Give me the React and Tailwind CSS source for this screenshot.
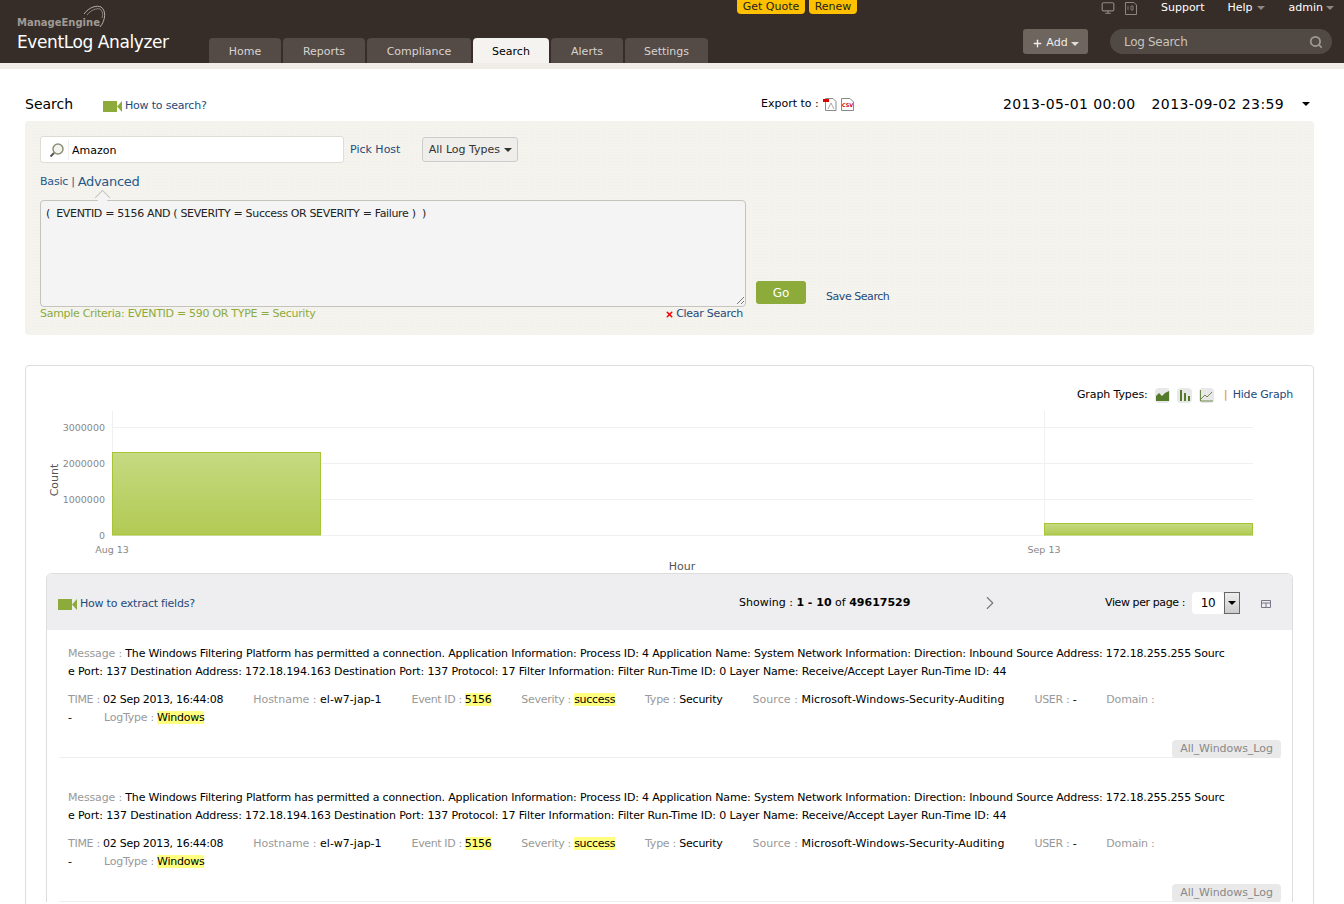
import React from 'react';
import { Monitor, Search, Plus, ChevronRight, X } from 'lucide-react';

const tabs = [
  { name: 'Home', width: 'w-[72px]' },
  { name: 'Reports', width: 'w-[82px]' },
  { name: 'Compliance', width: 'w-[104px]' },
  { name: 'Search', width: 'w-[76px]', active: true },
  { name: 'Alerts', width: 'w-[72px]' },
  { name: 'Settings', width: 'w-[83px]' },
];

const lineOne = 'The Windows Filtering Platform has permitted a connection. Application Information: Process ID: 4 Application Name: System Network Information: Direction: Inbound Source Address: 172.18.255.255 Sourc';
const lineTwo = 'e Port: 137 Destination Address: 172.18.194.163 Destination Port: 137 Protocol: 17 Filter Information: Filter Run-Time ID: 0 Layer Name: Receive/Accept Layer Run-Time ID: 44';

function Caret({ className }) {
  return <span className={`inline-block w-0 h-0 border-x-[4px] border-x-transparent border-t-[4px] ${className}`}></span>;
}

function VideoIcon() {
  return (
    <svg width="19" height="11" viewBox="0 0 19 11" className="shrink-0">
      <rect x="0" y="0" width="14" height="11" fill="#8cab3b" />
      <path d="M14 5.5 L19 0 V11 Z" fill="#8cab3b" />
    </svg>
  );
}

function Field({ label, value, mark, className }) {
  return (
    <span className={`whitespace-nowrap ${className || ''}`}>
      <span className="text-[#999]">{label} : </span>
      {value && <span className={mark ? 'bg-[#ffff80] text-black' : 'text-black'}>{value}</span>}
    </span>
  );
}

function LogRow() {
  return (
    <div className="mb-[16px] ml-3 mr-[11px] h-[128px] border-b border-[#eee] pl-[9px] pt-[15px] text-[11px] leading-[18px]">
      <div className="whitespace-nowrap tracking-[-0.165px] text-black">
        <span className="text-[#999]">Message : </span>{lineOne}
      </div>
      <div className="whitespace-nowrap tracking-[-0.13px] text-black">{lineTwo}</div>
      <div className="mt-[10px] flex gap-[30px]">
        <Field label="TIME" value="02 Sep 2013, 16:44:08" className="tracking-[-0.29px]" />
        <Field label="Hostname" value="el-w7-jap-1" />
        <Field label="Event ID" value="5156" mark className="tracking-[-0.38px]" />
        <Field label="Severity" value="success" mark className="tracking-[-0.3px]" />
        <Field label="Type" value="Security" className="tracking-[-0.25px]" />
        <Field label="Source" value="Microsoft-Windows-Security-Auditing" className="tracking-[0.05px]" />
        <Field label="USER" value="-" className="tracking-[-0.3px]" />
        <Field label="Domain" className="tracking-[-0.2px]" />
      </div>
      <div className="flex gap-[32px]">
        <span className="text-black">-</span>
        <Field label="LogType" value="Windows" mark className="tracking-[-0.25px]" />
      </div>
      <div className="mt-[13px] flex justify-end">
        <span className="flex h-[18px] w-[109px] items-center justify-center rounded-sm bg-[#e9e9e9] text-[#888] tracking-[-0.05px]">All_Windows_Log</span>
      </div>
    </div>
  );
}

function Chart() {
  const grid = [
    { y: 18, label: '3000000' },
    { y: 54, label: '2000000' },
    { y: 90, label: '1000000' },
    { y: 126, label: '0' },
  ];
  return (
    <svg width="1287" height="166" viewBox="0 0 1287 166" className="block">
      <defs>
        <linearGradient id="barFill" x1="0" y1="0" x2="0" y2="1">
          <stop offset="0" stopColor="#c5da82" />
          <stop offset="1" stopColor="#b2ca53" />
        </linearGradient>
      </defs>
      {grid.map((g) => (
        <g key={g.y}>
          <line x1="86" x2="1227" y1={g.y + 0.5} y2={g.y + 0.5} stroke="#f0f0f0" />
          <text x="79" y={g.y + 4} textAnchor="end" fontSize="9.5" fill="#888">{g.label}</text>
        </g>
      ))}
      <line x1="86.5" x2="86.5" y1="2" y2="126" stroke="#f0f0f0" />
      <line x1="1018.5" x2="1018.5" y1="2" y2="126" stroke="#f0f0f0" />
      <rect x="86.5" y="43.5" width="208" height="82.5" fill="url(#barFill)" stroke="#a5c436" />
      <rect x="1018.5" y="114.5" width="208" height="11.5" fill="url(#barFill)" stroke="#a5c436" />
      <text x="32" y="71" textAnchor="middle" fontSize="11" fill="#555" transform="rotate(-90 32 71)">Count</text>
      <text x="86" y="144" textAnchor="middle" fontSize="9.5" fill="#888">Aug 13</text>
      <text x="1018" y="144" textAnchor="middle" fontSize="9.5" fill="#888">Sep 13</text>
      <text x="656" y="161" textAnchor="middle" fontSize="11" fill="#555">Hour</text>
    </svg>
  );
}

export default function App() {
  return (
    <div className="h-[904px] w-[1344px] overflow-hidden bg-white font-['DejaVu_Sans',sans-serif] text-[11px] text-black">
      {/* Header */}
      <div className="flex h-[63px] bg-[#372d28]">
        <div className="w-[209px] pl-[17px]">
          <div className="relative mt-[16px] h-[14px] text-[10px] font-bold leading-[14px] text-[#a09a95]">
            ManageEngine
            <svg width="24" height="26" viewBox="0 0 24 26" className="absolute left-[66px] top-[-11px]">
              <path d="M1 9 C6 2 14 0 18 2 C23 5 23 15 17 22" fill="none" stroke="#b5b0ab" strokeWidth="1" />
              <path d="M4 10 C8 5 13 3 17 4 C20 6 20 10 19 13" fill="none" stroke="#8d8682" strokeWidth="1" />
            </svg>
          </div>
          <div className="whitespace-nowrap text-[17px] leading-[24px] tracking-[-0.4px] text-white">EventLog Analyzer</div>
        </div>
        <div className="flex w-[648px] flex-col justify-between">
          <div className="ml-[528px] flex gap-[4px]">
            <span className="flex h-[14px] w-[68px] items-center justify-center rounded-b-[4px] bg-[#ffc000] pt-[1px] text-[#222]">Get Quote</span>
            <span className="flex h-[14px] w-[48px] items-center justify-center rounded-b-[4px] bg-[#ffc000] pt-[1px] text-[#222]">Renew</span>
          </div>
          <div className="flex gap-[2px]">
            {tabs.map((t) => (
              <div
                key={t.name}
                className={`flex h-[25px] items-center justify-center rounded-t-[4px] pt-[3px] ${t.width} ${t.active ? 'bg-[#f5f3ef] text-black' : 'bg-[#544b46] text-[#d8d4d0]'}`}
              >
                {t.name}
              </div>
            ))}
          </div>
        </div>
        <div className="flex flex-1 flex-col">
          <div className="flex h-[16px] items-center justify-end gap-[23px] pr-[10px] text-white">
            <div className="flex items-center gap-[9px]">
              <Monitor size={14} className="text-[#8d8682]" />
              <svg width="14" height="13" viewBox="0 0 14 13">
                <path d="M1.5 .5 H10 L12.5 3 V12.5 H1.5 Z" fill="none" stroke="#8d8682" />
                <path d="M4 4 V8 M7 4 H9 V8 H7 Z" fill="none" stroke="#8d8682" strokeWidth=".8" />
              </svg>
            </div>
            <span>Support</span>
            <span className="flex items-center gap-[4px]">Help <Caret className="border-t-[#8d8682]" /></span>
            <span className="ml-[1px] flex items-center gap-[3px]">admin <Caret className="border-t-[#8d8682]" /></span>
          </div>
          <div className="mt-[13px] flex items-center">
            <div className="ml-[166px] flex h-[25px] w-[65px] items-center justify-center gap-[3px] rounded-[3px] bg-[#6d655e] pt-[4px] text-[#f0eeec]">
              <Plus size={11} strokeWidth={3} />
              Add
              <Caret className="border-t-[#e0dcd8]" />
            </div>
            <div className="ml-[22px] flex h-[25px] w-[222px] items-center justify-between rounded-full bg-[#514944] pl-[14px] pr-[9px] text-[12px] tracking-[-0.3px] text-[#c8c3be]">
              Log Search
              <Search size={14} strokeWidth={3} className="text-[#a09a95]" />
            </div>
          </div>
        </div>
      </div>
      <div className="h-[6px] bg-[#f0ece6]"></div>

      {/* Title row */}
      <div className="flex h-[52px] items-center pl-[25px] pt-[18px]">
        <div className="w-[78px] text-[14px]">Search</div>
        <div className="flex w-[658px] items-center gap-[3px] pt-[5px] tracking-[-0.2px] text-[#1f4a7a]">
          <VideoIcon />
          How to search?
        </div>
        <div className="flex w-[242px] items-center gap-[4px]">
          Export to :
          <svg width="14" height="13" viewBox="0 0 14 13">
            <path d="M2.5 .5 H10 L13 3.5 V12.5 H2.5 Z" fill="#fff" stroke="#888" />
            <rect x="0" y="1" width="6" height="3" fill="#d00" />
            <path d="M5 11 L8 5 L11 11" fill="none" stroke="#aaa" />
          </svg>
          <svg width="13" height="13" viewBox="0 0 13 13">
            <path d="M.5 .5 H9 L12.5 4 V12.5 H.5 Z" fill="#fff" stroke="#888" />
            <text x="6.5" y="8.5" textAnchor="middle" fontSize="5" fontWeight="bold" fill="#c00">CSV</text>
          </svg>
        </div>
        <div className="flex items-center text-[14px] tracking-[.4px]">
          <span>2013-05-01 00:00</span>
          <span className="ml-[16px]">2013-09-02 23:59</span>
          <Caret className="ml-[18px] border-t-black" />
        </div>
      </div>

      {/* Search panel */}
      <div className="ml-[25px] h-[214px] w-[1289px] rounded-[4px] bg-[#f5f3ee] bg-[radial-gradient(#f0eee8_1px,transparent_1px)] bg-[length:3px_3px] pl-[15px] pt-[15px]">
        <div className="flex items-center">
          <div className="flex h-[27px] w-[304px] items-center rounded-[3px] border border-[#dfdcd6] bg-white">
            <svg width="16" height="16" viewBox="0 0 16 16" className="ml-[8px]">
              <circle cx="9" cy="7" r="5" fill="#f4f4ee" stroke="#8a9078" strokeWidth="1.5" />
              <path d="M5 11 L1.5 14.5" stroke="#555" strokeWidth="2" />
            </svg>
            <span className="ml-[3px] h-[20px] border-l border-[#eee] pl-[3px] pt-[1px] leading-[20px]">Amazon</span>
          </div>
          <span className="ml-[6px] pt-[1px] text-[#1f4a7a]">Pick Host</span>
          <div className="ml-[22px] flex h-[25px] w-[96px] items-center justify-center gap-[4px] rounded-[3px] border border-[#ccc] bg-[#efeeea] pt-[1px] text-[#333]">
            All Log Types <Caret className="border-t-[#333]" />
          </div>
        </div>
        <div className="mt-[10px] flex h-[18px] items-center gap-[3px] tracking-[-0.2px] text-[#1f5a8a]">
          Basic <span>|</span> <span className="text-[13px] tracking-[-0.3px]">Advanced</span>
        </div>
        <div className="relative mt-[9px] flex items-end">
          <div className="absolute left-[57px] top-[-8px] h-[11px] w-[11px] rotate-45 border-l border-t border-[#c4c4bc] bg-[#f4f4f4]"></div>
          <div className="h-[107px] w-[706px] rounded-[4px] border border-[#c4c4bc] bg-[#f4f4f4] px-[5px] pt-[5px] tracking-[-0.34px] text-[#222]">
            ( &nbsp;EVENTID = 5156 AND ( SEVERITY = Success OR SEVERITY = Failure ) &nbsp;)
          </div>
          <svg width="9" height="9" viewBox="0 0 9 9" className="absolute left-[696px] top-[96px]">
            <path d="M1 8 L8 1 M5 8 L8 5" stroke="#777" />
          </svg>
          <div className="mb-[3px] ml-[10px] flex h-[23px] w-[50px] items-center justify-center rounded-[3px] bg-[#8cab3b] pt-[1px] text-[12px] text-white">Go</div>
          <div className="mb-[2px] ml-[20px] tracking-[-0.45px] text-[#1f4a7a]">Save Search</div>
        </div>
        <div className="flex h-[14px] w-[703px] items-center justify-between tracking-[-0.29px] text-[#8cab3b]">
          Sample Criteria: EVENTID = 590 OR TYPE = Security
          <span className="flex items-center gap-[2px] tracking-[-0.27px] text-[#1f4a7a]">
            <X size={9} strokeWidth={4} className="text-[#e00]" />
            Clear Search
          </span>
        </div>
      </div>

      {/* Graph and results */}
      <div className="ml-[25px] mt-[30px] w-[1289px] rounded-[4px] border border-[#ddd] pb-[20px]">
        <div className="flex h-[43px] items-end justify-end gap-[7px] pb-[6px] pr-[20px]">
          <span className="tracking-[-0.1px]">Graph Types:</span>
          {[
            'M1 13 V8 L4 5 L7 8 L10 5 L14 3 V13 Z',
            'M3 13 V2 H5 V13 Z M7 13 V5 H9 V13 Z M11 13 V8 H13 V13 Z',
          ].map((d) => (
            <span key={d} className="flex h-[15px] w-[15px] items-center justify-center rounded-sm bg-[#e8e8e8]">
              <svg width="15" height="15" viewBox="0 0 15 15"><path d={d} fill="#557a2a" /></svg>
            </span>
          ))}
          <span className="flex h-[15px] w-[15px] items-center justify-center rounded-sm bg-[#e8e8e8]">
            <svg width="15" height="15" viewBox="0 0 15 15">
              <path d="M1.5 2 V13 H14 M2 11 L6 7 L8 9 L13 4" fill="none" stroke="#6f8a4a" />
            </svg>
          </span>
          <span className="ml-[3px] font-bold text-[#f0a030]">|</span>
          <span className="ml-[-2px] tracking-[-0.2px] text-[#1f4a7a]">Hide Graph</span>
        </div>
        <Chart />
        <div className="mx-[20px] mt-[-2px] rounded-t-[6px] border border-b-0 border-[#ddd]">
          <div className="flex h-[56px] items-center rounded-t-[6px] bg-[#eeeef0] pl-[11px] pt-[2px]">
            <div className="flex w-[681px] items-center gap-[3px] pt-[2px] tracking-[-0.23px] text-[#1f4a7a]">
              <VideoIcon />
              How to extract fields?
            </div>
            <div className="w-[240px]">Showing : <b>1 - 10</b> of <b>49617529</b></div>
            <ChevronRight size={22} strokeWidth={1.2} className="text-[#777]" />
            <div className="ml-[104px] flex items-center tracking-[-0.4px]">
              View per page :
              <span className="ml-[7px] flex h-[22px] w-[32px] items-center justify-center rounded-sm bg-white text-[12px]">10</span>
              <span className="flex h-[22px] w-[16px] items-center justify-center border border-[#666] bg-[linear-gradient(#eee,#ccc)]">
                <Caret className="border-t-black" />
              </span>
              <svg width="11" height="11" viewBox="0 0 11 11" className="ml-[21px] mt-[3px]">
                <path d="M.5 1.5 H9.5 V8.5 H.5 Z M.5 4 H9.5 M5 4 V8.5" fill="none" stroke="#778" />
              </svg>
            </div>
          </div>
          <LogRow />
          <LogRow />
        </div>
      </div>
    </div>
  );
}
